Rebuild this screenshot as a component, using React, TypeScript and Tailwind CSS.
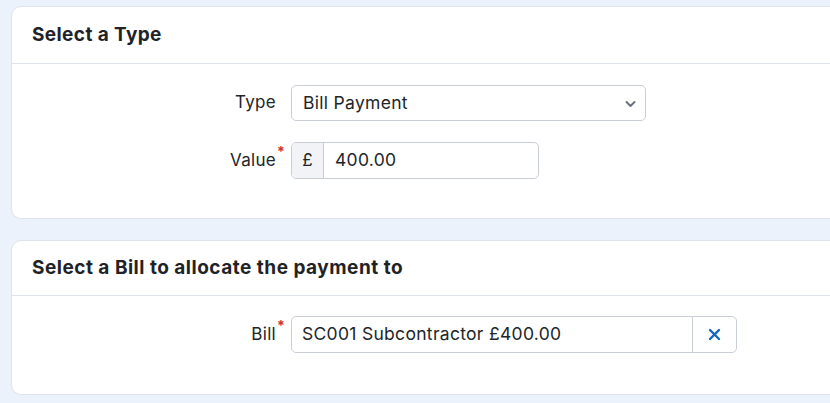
import React from "react";

const font = { fontFamily: "Inter, 'Open Sans', sans-serif" };

function Label({ text, required }: { text: string; required?: boolean }) {
  return (
    <div className="w-[265px] shrink-0 flex justify-end pr-[1px]">
      <span className="relative text-[17px] tracking-[0.3px] text-[#212529]">
        {text}
        {required && (
          <span className="absolute left-full top-[-7px] ml-[1px] text-[14px] font-bold text-[#d32f2f]">*</span>
        )}
      </span>
    </div>
  );
}

export default function App() {
  return (
    <div className="w-[830px] h-[403px] overflow-hidden bg-[#ecf2fb] pt-[6px] pl-[11px]" style={font}>
      <div className="w-[880px] flex flex-col gap-[21px]">
        {/* Card 1 */}
        <div className="bg-white border border-[#dfe3ea] rounded-[10px]">
          <div className="h-[57px] border-b border-[#dfe3ea] flex items-center pl-[20px]">
            <h2 className="text-[19px] font-bold text-[#1f2328] tracking-[0.4px]">Select a Type</h2>
          </div>
          <div className="pt-[21px] pb-[39px] flex flex-col gap-[21px]">
            <div className="flex items-center gap-[14px]">
              <Label text="Type" />
              <div className="w-[355px] h-[36px] border border-[#c9ced6] rounded-[5px] flex items-center justify-between pl-[11px] pr-[9px]">
                <span className="text-[17.5px] tracking-[0.3px] text-[#212529]">Bill Payment</span>
                <svg width="11" height="8" viewBox="0 0 11 8" className="mt-[1px]">
                  <path d="M1.5 2 L5.5 6 L9.5 2" fill="none" stroke="#6b7280" strokeWidth="2" strokeLinecap="round" strokeLinejoin="round" />
                </svg>
              </div>
            </div>
            <div className="flex items-center gap-[14px]">
              <Label text="Value" required />
              <div className="w-[248px] h-[37px] border border-[#c9ced6] rounded-[5px] flex overflow-hidden">
                <div className="w-[32px] bg-[#f1f3f6] border-r border-[#c9ced6] flex items-center justify-center text-[17px] text-[#212529]">£</div>
                <div className="flex items-center pl-[11px] text-[17.5px] tracking-[0.3px] text-[#212529]">400.00</div>
              </div>
            </div>
          </div>
        </div>

        {/* Card 2 */}
        <div className="bg-white border border-[#dfe3ea] rounded-[10px]">
          <div className="h-[55px] border-b border-[#dfe3ea] flex items-center pl-[20px]">
            <h2 className="text-[19px] font-bold text-[#1f2328] tracking-[0.5px]">Select a Bill to allocate the payment to</h2>
          </div>
          <div className="pt-[20px] pb-[41px]">
            <div className="flex items-center gap-[14px]">
              <Label text="Bill" required />
              <div className="w-[446px] h-[37px] border border-[#c9ced6] rounded-[5px] flex">
                <div className="flex-1 flex items-center pl-[10px] text-[17.5px] tracking-[0.3px] text-[#212529]">SC001 Subcontractor £400.00</div>
                <div className="w-[44px] border-l border-[#c9ced6] flex items-center justify-center">
                  <svg width="13" height="13" viewBox="0 0 13 13">
                    <path d="M2 2 L11 11 M11 2 L2 11" stroke="#1565c0" strokeWidth="2.4" strokeLinecap="round" />
                  </svg>
                </div>
              </div>
            </div>
          </div>
        </div>
      </div>
    </div>
  );
}
